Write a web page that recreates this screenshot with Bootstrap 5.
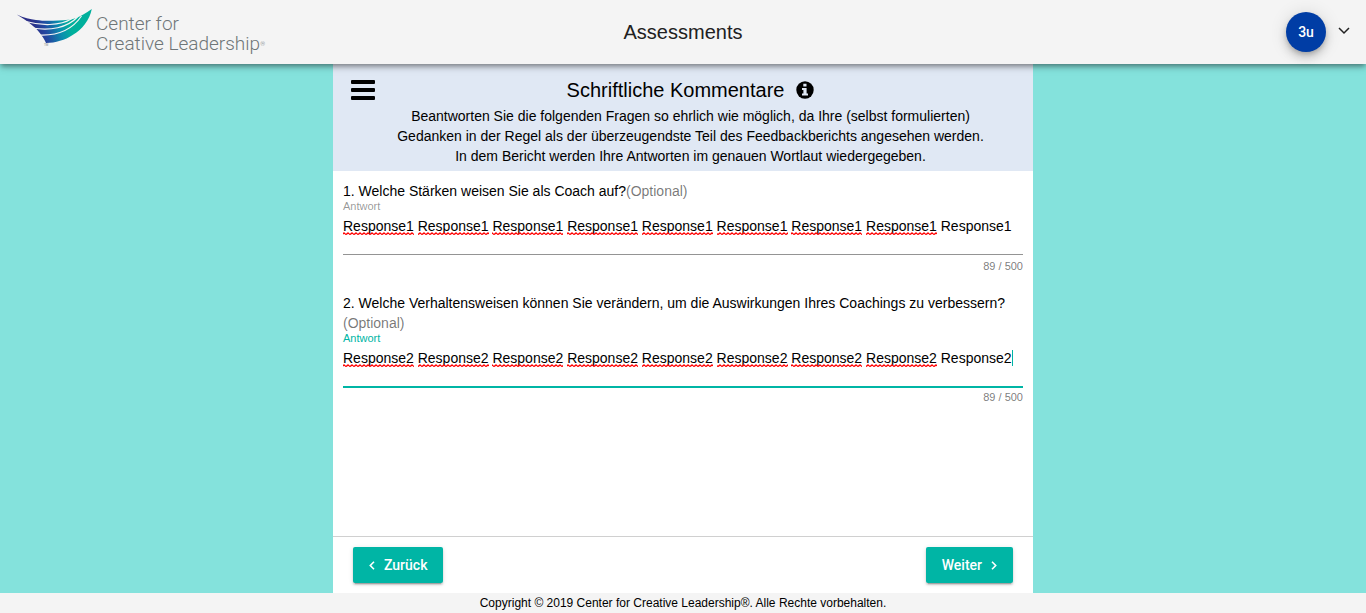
<!DOCTYPE html>
<html lang="de">
<head>
<meta charset="utf-8">
<meta name="viewport" content="width=device-width, initial-scale=1">
<title>Assessments</title>
<link href="https://cdn.jsdelivr.net/npm/bootstrap@5.3.0/dist/css/bootstrap.min.css" rel="stylesheet">
<style>
  :root { --ccl-teal: #00b5a5; }
  body { font: 14px/20px "Liberation Sans", Arial, sans-serif; color: #000; background: #84e2dc; }
  .topbar {
    display: grid; grid-template-columns: 1fr auto 1fr; height: 64px; background: #f4f4f4; z-index: 2;
    box-shadow: 0 3px 5px -1px rgba(0,0,0,.4), 0 4px 8px rgba(0,0,0,.12);
  }
  .topbar h1 { font-size: 20px; line-height: 24px; color: #212121; }
  .brand-link { color: #6f7678; padding-left: 16px; gap: 4px; }
  .brand-name { font: 300 19px/20px Roboto, sans-serif; padding-top: 3px; }
  .brand-name small { font-size: 6px; line-height: 6px; vertical-align: 4px; }
  .avatar {
    width: 40px; height: 40px; background: #003da5; font: 500 14px/20px Roboto, sans-serif;
    box-shadow: 0 3px 5px -1px rgba(0,0,0,.2), 0 6px 10px rgba(0,0,0,.14), 0 1px 18px rgba(0,0,0,.12);
  }
  .account { padding-right: 16px; gap: 12px; }
  .sheet { width: 100%; max-width: 700px; background: #fff; }
  .intro { background: #e0e8f4; padding: 12px 43px 5px 18px; }
  .intro h2 { font-size: 20px; line-height: 28px; gap: 12px; margin-bottom: 2px; }
  .menu-btn { width: 40px; padding-top: 4px; }
  .questions { padding: 10px 10px 0; }
  .question { margin-bottom: 20px; }
  .optional { color: rgba(0,0,0,.54); }
  .caption-label { font-size: 11px; line-height: 10px; color: rgba(0,0,0,.42); }
  .answer { position: relative; border-bottom: 1px solid #949494; padding: 5px 0 7px; }
  .answer textarea { height: 31px; line-height: 20px; resize: none; outline: 0; overflow: hidden; color: #000; }
  .answer svg { position: absolute; left: 0; top: 0; pointer-events: none; }
  .counter { font-size: 11px; line-height: 14px; padding-top: 4px; color: rgba(0,0,0,.54); }
  .is-active .caption-label { color: var(--ccl-teal); }
  .is-active .answer { border-bottom: 2px solid var(--ccl-teal); }
  .is-active .counter { padding-top: 2px; }
  .actions { border-top: 1px solid #d0d0d0; padding: 10px 20px; }
  .btn-ccl {
    --bs-btn-color: #fff; --bs-btn-bg: var(--ccl-teal); --bs-btn-hover-color: #fff; --bs-btn-hover-bg: #009e90;
    --bs-btn-active-bg: #00897d; --bs-btn-active-color: #fff;
    font: 500 14px/36px Roboto, sans-serif; padding: 0 16px; border: 0; border-radius: 2px; gap: 9px;
    box-shadow: 0 3px 1px -2px rgba(0,0,0,.2), 0 2px 2px rgba(0,0,0,.14), 0 1px 5px rgba(0,0,0,.12);
  }
  .page-foot { background: #f4f4f4; font-size: 12px; line-height: 20px; }
</style>
</head>
<body class="d-flex flex-column min-vh-100">
<svg width="0" height="0" class="position-absolute" aria-hidden="true">
  <defs>
    <pattern id="wave" width="4" height="3" patternUnits="userSpaceOnUse">
      <path d="M-1 3 L1 .8 L3 2.6 L5 .6" fill="none" stroke="#f00" stroke-width="1.1"/>
    </pattern>
    <g id="squiggles" fill="url(#wave)">
      <rect x="0" y="21" width="71" height="3"/><rect x="75" y="21" width="71" height="3"/>
      <rect x="149" y="21" width="71" height="3"/><rect x="224" y="21" width="71" height="3"/>
      <rect x="299" y="21" width="71" height="3"/><rect x="374" y="21" width="71" height="3"/>
      <rect x="448" y="21" width="71" height="3"/><rect x="523" y="21" width="71" height="3"/>
    </g>
  </defs>
</svg>

<header class="topbar align-items-center position-sticky top-0">
  <a href="#" class="brand-link d-flex align-items-center text-decoration-none" aria-label="Center for Creative Leadership">
    <svg width="76" height="46" viewBox="0 0 76 46" aria-hidden="true">
      <defs>
        <linearGradient id="wing" gradientUnits="userSpaceOnUse" x1="18" y1="20" x2="58" y2="8">
          <stop offset="0" stop-color="#2b2f88"/><stop offset=".25" stop-color="#2347a0"/>
          <stop offset=".6" stop-color="#0a8fae"/><stop offset=".85" stop-color="#00b09c"/>
        </linearGradient>
      </defs>
      <path fill="url(#wing)" d="M.7 5.500 C8 9 14 10.300 20 11 C26 11.800 31 12 37 11.700 C44 11.600 51 11.200 57 10 C64 8.300 70 4 75.800 0 C74.500 6 72.500 10.500 69 15 C65.500 19.500 62 23 57 25.700 C52.500 28.800 49 30.500 44 31.700 C39.500 33.200 35 33.800 30 34 C28.500 30.500 26.500 27.500 24 24.300 C22 21.500 19.500 18.800 16.700 16.700 C14 14.500 11.500 12.500 9 10.700Z"/>
      <g fill="none" stroke="#f4f4f4" stroke-width="1.2">
        <path d="M10 12.500 C24 16.500 44 17.500 56 9.500"/>
        <path d="M16.500 19 C34 22 51 19 61.500 8"/>
        <path d="M22.500 26 C42 27 56 21 65.500 7"/>
      </g>
      <text x="28" y="37" font-size="3" fill="#7b8284">TM</text>
    </svg>
    <span class="brand-name">Center for<br>Creative Leadership<small>®</small></span>
  </a>
  <h1 class="m-0 fw-normal">Assessments</h1>
  <div class="account d-flex align-items-center justify-content-end">
    <span class="avatar rounded-circle text-white d-flex align-items-center justify-content-center">3u</span>
    <button type="button" class="btn p-0 border-0 d-flex" aria-label="Konto">
      <svg width="12" height="12" viewBox="0 0 12 12" fill="none" stroke="#222" stroke-width="1.500"><path d="M1 2 L6 7 L11 2"/></svg>
    </button>
  </div>
</header>

<main class="sheet mx-auto d-flex flex-column flex-grow-1">
  <section class="intro d-flex">
    <button type="button" class="menu-btn btn border-0 px-0 pb-0 d-flex align-items-start flex-shrink-0 text-start" aria-label="Menü">
      <svg width="24" height="20" viewBox="0 0 24 20"><rect width="24" height="4" rx="1"/><rect y="8" width="24" height="4" rx="1"/><rect y="16" width="24" height="4" rx="1"/></svg>
    </button>
    <div class="flex-grow-1 text-center">
      <h2 class="fw-normal d-flex justify-content-center align-items-center">Schriftliche Kommentare
        <svg width="18" height="18" viewBox="0 0 18 18" role="img" aria-label="Info"><circle cx="9" cy="9" r="8.700"/><path fill="#e0e8f4" d="M7.300 2.800h3.200v2.700H7.300zM6 7h4.600v5.500H12v2H6v-2h1.400V9H6z"/></svg>
      </h2>
      <p class="m-0">Beantworten Sie die folgenden Fragen so ehrlich wie möglich, da Ihre (selbst formulierten) Gedanken in der Regel als der überzeugendste Teil des Feedbackberichts angesehen werden. In dem Bericht werden Ihre Antworten im genauen Wortlaut wiedergegeben.</p>
    </div>
  </section>

  <form class="questions flex-grow-1">
    <div class="question">
      <div>1. Welche Stärken weisen Sie als Coach auf?<span class="optional">(Optional)</span></div>
      <label class="caption-label d-block" for="answer1">Antwort</label>
      <div class="answer">
        <textarea id="answer1" class="d-block w-100 border-0 p-0 bg-transparent" maxlength="500" spellcheck="false">Response1 Response1 Response1 Response1 Response1 Response1 Response1 Response1 Response1</textarea>
        <svg width="680" height="30" aria-hidden="true"><use href="#squiggles"/></svg>
      </div>
      <div class="counter text-end">89 / 500</div>
    </div>
    <div class="question is-active">
      <div>2. Welche Verhaltensweisen können Sie verändern, um die Auswirkungen Ihres Coachings zu verbessern? <span class="optional">(Optional)</span></div>
      <label class="caption-label d-block" for="answer2">Antwort</label>
      <div class="answer">
        <textarea id="answer2" class="d-block w-100 border-0 p-0 bg-transparent" maxlength="500" spellcheck="false">Response2 Response2 Response2 Response2 Response2 Response2 Response2 Response2 Response2</textarea>
        <svg width="680" height="30" aria-hidden="true"><use href="#squiggles"/><rect x="669" y="7" width="1" height="16" fill="#00b5a5"/></svg>
      </div>
      <div class="counter text-end">89 / 500</div>
    </div>
  </form>

  <div class="actions d-flex justify-content-between">
    <button type="button" class="btn btn-ccl d-flex align-items-center">
      <svg width="6" height="9" viewBox="0 0 6 9" fill="none" stroke="currentColor" stroke-width="1.600"><path d="M5 .8 L1.300 4.500 L5 8.200"/></svg>Zurück
    </button>
    <button type="button" class="btn btn-ccl d-flex align-items-center">Weiter
      <svg width="6" height="9" viewBox="0 0 6 9" fill="none" stroke="currentColor" stroke-width="1.600"><path d="M1 .8 L4.700 4.500 L1 8.200"/></svg>
    </button>
  </div>
</main>

<footer class="page-foot text-center">Copyright © 2019 Center for Creative Leadership®. Alle Rechte vorbehalten.</footer>
<script src="https://cdn.jsdelivr.net/npm/bootstrap@5.3.0/dist/js/bootstrap.bundle.min.js"></script>
</body>
</html>
